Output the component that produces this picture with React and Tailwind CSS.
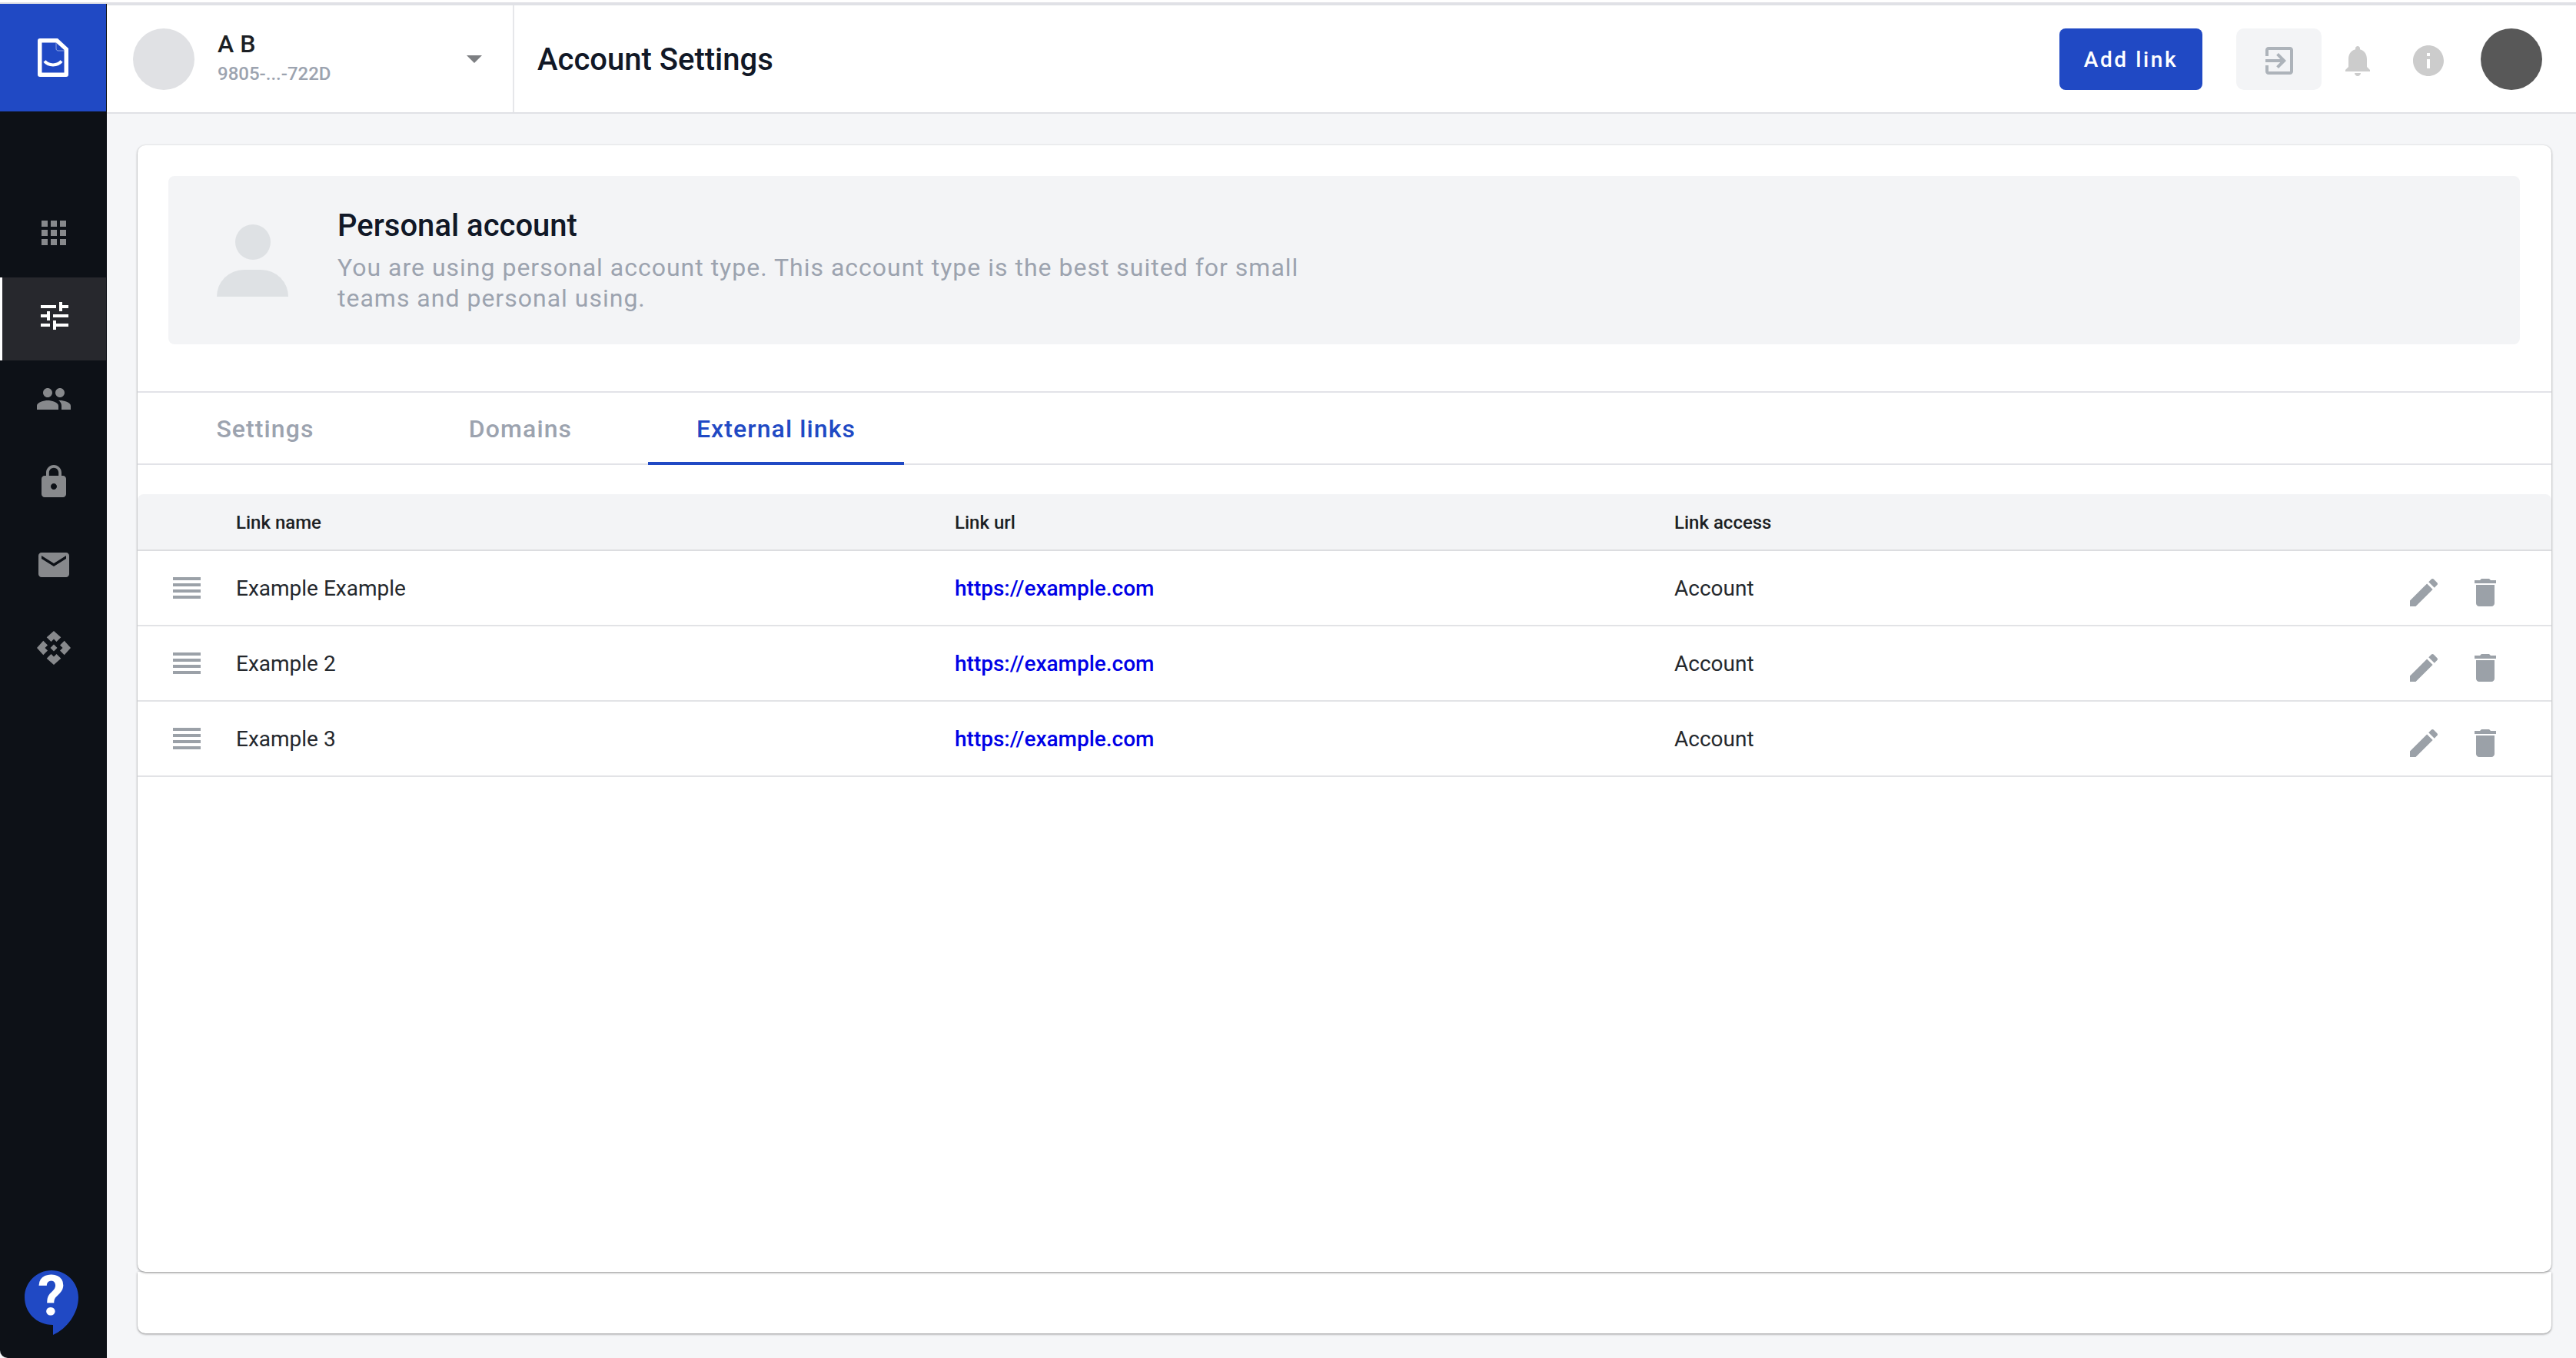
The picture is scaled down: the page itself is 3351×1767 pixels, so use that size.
const blue = 'bg-[#2049c4]'

function Icon({ d, className }) {
  return (
    <svg viewBox="0 0 24 24" className={className} fill="currentColor">
      <path d={d} />
    </svg>
  )
}

const paths = {
  apps: 'M4 8h4V4H4v4zm6 12h4v-4h-4v4zm-6 0h4v-4H4v4zm0-6h4v-4H4v4zm6 0h4v-4h-4v4zm6-10v4h4V4h-4zm-6 4h4V4h-4v4zm6 6h4v-4h-4v4zm0 6h4v-4h-4v4z',
  tune: 'M3 17v2h6v-2H3zM3 5v2h10V5H3zm10 16v-2h8v-2h-8v-2h-2v6h2zM7 9v2H3v2h4v2h2V9H7zm14 4v-2H11v2h10zm-6-4h2V7h4V5h-4V3h-2v6z',
  people: 'M16 11c1.66 0 2.99-1.34 2.99-3S17.66 5 16 5c-1.66 0-3 1.34-3 3s1.34 3 3 3zm-8 0c1.66 0 2.99-1.34 2.99-3S9.66 5 8 5C6.34 5 5 6.34 5 8s1.34 3 3 3zm0 2c-2.33 0-7 1.17-7 3.5V19h14v-2.5c0-2.33-4.67-3.5-7-3.5zm8 0c-.29 0-.62.02-.97.05 1.16.84 1.97 1.97 1.97 3.45V19h6v-2.5c0-2.33-4.67-3.5-7-3.5z',
  lock: 'M18 8h-1V6c0-2.76-2.24-5-5-5S7 3.24 7 6v2H6c-1.1 0-2 .9-2 2v10c0 1.1.9 2 2 2h12c1.1 0 2-.9 2-2V10c0-1.1-.9-2-2-2zm-6 9c-1.1 0-2-.9-2-2s.9-2 2-2 2 .9 2 2-.9 2-2 2zm3.1-9H8.9V6c0-1.71 1.39-3.1 3.1-3.1 1.71 0 3.1 1.39 3.1 3.1v2z',
  mail: 'M20 4H4c-1.1 0-1.99.9-1.99 2L2 18c0 1.1.9 2 2 2h16c1.1 0 2-.9 2-2V6c0-1.1-.9-2-2-2zm0 4l-8 5-8-5V6l8 5 8-5v2z',
  exit: 'M10.09 15.59L11.5 17l5-5-5-5-1.41 1.41L12.67 11H3v2h9.67l-2.58 2.59zM19 3H5c-1.11 0-2 .9-2 2v4h2V5h14v14H5v-4H3v4c0 1.1.89 2 2 2h14c1.1 0 2-.9 2-2V5c0-1.1-.9-2-2-2z',
  bell: 'M12 22c1.1 0 2-.9 2-2h-4c0 1.1.89 2 2 2zm6-6v-5c0-3.07-1.64-5.64-4.5-6.32V4c0-.83-.67-1.5-1.5-1.5s-1.5.67-1.5 1.5v.68C7.63 5.36 6 7.92 6 11v5l-2 2v1h16v-1l-2-2z',
  info: 'M12 2C6.48 2 2 6.48 2 12s4.48 10 10 10 10-4.48 10-10S17.52 2 12 2zm1 15h-2v-6h2v6zm0-8h-2V7h2v2z',
  edit: 'M3 17.25V21h3.75L17.81 9.94l-3.75-3.75L3 17.25zM20.71 7.04c.39-.39.39-1.02 0-1.41l-2.34-2.34c-.39-.39-1.02-.39-1.41 0l-1.83 1.83 3.75 3.75 1.83-1.83z',
  trash: 'M6 19c0 1.1.9 2 2 2h8c1.1 0 2-.9 2-2V7H6v12zM19 4h-3.5l-1-1h-5l-1 1H5v2h14V4z',
}

function Logo() {
  return (
    <svg viewBox="0 0 40 50" className="w-[40px] h-[50px]">
      <path fill="#fff" d="M3 0H26L40 13V47C40 49 39 50 37 50H3C1 50 0 49 0 47V3C0 1 1 0 3 0Z" />
      <path fill="#2049c4" d="M5.5 5.5H24L34.5 15V44.5H5.5Z" />
      <path fill="none" stroke="#fff" strokeOpacity="0.5" strokeWidth="1" d="M24 5.5V13C24 15 25 16 27 16H34.5" />
      <path fill="none" stroke="#fff" strokeWidth="4" d="M9 29.5C14 36 26 36 31 29.5" />
    </svg>
  )
}

function Diamonds() {
  const arm = 'M22 0L31.3 8.3L25.5 14L22 10.5L18.5 14L12.7 8.3Z'
  return (
    <svg viewBox="0 0 44 44" className="w-[44px] h-[44px]" fill="currentColor">
      <path d={arm} />
      <path d={arm} transform="rotate(90 22 22)" />
      <path d={arm} transform="rotate(180 22 22)" />
      <path d={arm} transform="rotate(270 22 22)" />
      <path d="M22 17.5L26.5 22L22 26.5L17.5 22Z" />
    </svg>
  )
}

function HelpBubble() {
  return (
    <div className="relative w-[70px] h-[84px]">
      <svg viewBox="0 0 70 84" className="w-[70px] h-[84px]">
        <path fill="#2049c4" d="M35 0C54.3 0 70 15.7 70 35C70 56 55 76 37 84V71C15 71 0 54.3 0 35C0 15.7 15.7 0 35 0Z" />
      </svg>
      <span className="absolute left-[17px] top-[-8px] text-[72px] leading-[84px] font-bold text-white">?</span>
    </div>
  )
}

function Sidebar() {
  return (
    <aside className="w-[139px] shrink-0 flex flex-col bg-[#0d1117] rounded-bl-[10px] text-[#87898c]">
      <div className="w-[138px] h-[140px] bg-[#2049c4] flex items-center justify-center">
        <Logo />
      </div>
      <div className="mt-[104px] h-[108px] flex items-center justify-center">
        <Icon d={paths.apps} className="w-[48px] h-[48px]" />
      </div>
      <div className="mt-[4px] w-[138px] h-[108px] pb-[8px] bg-[#27282d] border-l-[3px] border-white flex items-center justify-center text-white">
        <Icon d={paths.tune} className="w-[48px] h-[48px]" />
      </div>
      <div className="h-[100px] flex items-center justify-center">
        <Icon d={paths.people} className="w-[48px] h-[48px]" />
      </div>
      <div className="mt-[8px] h-[100px] flex items-center justify-center">
        <Icon d={paths.lock} className="w-[48px] h-[48px]" />
      </div>
      <div className="mt-[8px] h-[100px] flex items-center justify-center">
        <Icon d={paths.mail} className="w-[48px] h-[48px]" />
      </div>
      <div className="mt-[8px] h-[100px] flex items-center justify-center">
        <Diamonds />
      </div>
      <div className="mt-auto mb-[30px] pl-[32px]">
        <HelpBubble />
      </div>
    </aside>
  )
}

function Header() {
  return (
    <header className="h-[143px] shrink-0 flex items-stretch bg-white border-t-2 border-b-2 border-[#e0e1e6]">
      <div className="w-[530px] shrink-0 flex items-center pl-[34px] pr-[40px] border-r-2 border-[#e6e7ea]">
        <div className="w-[80px] h-[80px] rounded-full bg-[#e0e1e4]" />
        <div className="ml-[30px] flex-1 -mt-[4px]">
          <div className="text-[32px] leading-[34px] font-medium text-[#1c1f24]">A B</div>
          <div className="mt-[8px] text-[24px] leading-[28px] font-medium text-[#9ca3af]">9805-...-722D</div>
        </div>
        <div className="w-0 h-0 border-x-[10px] border-x-transparent border-t-[10px] border-t-[#7d7f82]" />
      </div>
      <h1 className="ml-[30px] mt-[2px] self-center text-[40px] font-medium text-[#111827]">Account Settings</h1>
      <div className="ml-auto flex items-center pr-[44px]">
        <button className={`w-[186px] h-[80px] pt-[2px] rounded-[8px] ${blue} text-white text-[28px] font-medium tracking-[2.6px]`}>Add link</button>
        <div className="ml-[44px] w-[111px] h-[80px] pt-[5px] rounded-[10px] bg-[#f3f4f6] flex items-center justify-center text-[#adb3ba]">
          <Icon d={paths.exit} className="w-[48px] h-[48px]" />
        </div>
        <Icon d={paths.bell} className="ml-[23px] mt-[5px] w-[48px] h-[48px] text-[#cccccc]" />
        <Icon d={paths.info} className="ml-[44px] mt-[5px] w-[48px] h-[48px] text-[#cccccc]" />
        <div className="ml-[44px] w-[80px] h-[80px] rounded-full bg-[#585858]" />
      </div>
    </header>
  )
}

function AccountBanner() {
  return (
    <div className="mt-[40px] ml-[40px] mr-[41px] h-[219px] rounded-[8px] bg-[#f3f4f6] flex pl-[63px]">
      <div className="w-[93px] mt-[63px] flex flex-col items-center">
        <div className="w-[46px] h-[46px] rounded-full bg-[#dee1e4]" />
        <div className="mt-[13px] w-[93px] h-[35px] rounded-t-[46px] bg-[#dee1e4]" />
      </div>
      <div className="ml-[64px] pt-[39px]">
        <h2 className="text-[40px] leading-[52px] font-medium text-[#111827]">Personal account</h2>
        <p className="mt-[8px] w-[1300px] text-[32px] leading-[40px] tracking-[1px] text-[#9ca3af]">
          You are using personal account type. This account type is the best suited for small teams and personal using.
        </p>
      </div>
    </div>
  )
}

function Tabs() {
  const tabs = ['Settings', 'Domains', 'External links']
  return (
    <div className="mt-[61px] h-[96px] flex border-y-2 border-[#e2e3e8]">
      {tabs.map((t, i) => (
        <div
          key={t}
          className={
            i === 2
              ? 'w-[333px] h-[94px] pt-[3px] flex items-center justify-center text-[32px] font-medium tracking-[1.1px] text-[#2049c4] border-b-4 border-[#2049c4]'
              : 'w-[332px] h-[92px] pt-[2px] flex items-center justify-center text-[32px] font-medium tracking-[1.1px] text-[#9ca3af]'
          }
        >
          {t}
        </div>
      ))}
    </div>
  )
}

const rows = ['Example Example', 'Example 2', 'Example 3']

function LinksTable() {
  return (
    <div className="mt-[38px]">
      <div className="h-[74px] pt-[2px] flex items-center pl-[128px] bg-[#f3f4f6] border-b-2 border-[#dcdde0] rounded-t-[8px] text-[24px] font-medium text-[#1c1f24]">
        <div className="w-[935px]">Link name</div>
        <div className="w-[936px]">Link url</div>
        <div>Link access</div>
      </div>
      {rows.map((name) => (
        <div key={name} className="h-[98px] flex items-center border-b-2 border-[#e2e3e6] text-[28px] text-[#24282d]">
          <svg viewBox="0 0 36 28" className="ml-[46px] w-[36px] h-[28px]" fill="#9ba1a8">
            <rect y="0" width="36" height="4" />
            <rect y="8" width="36" height="4" />
            <rect y="16" width="36" height="4" />
            <rect y="24" width="36" height="4" />
          </svg>
          <div className="ml-[46px] w-[935px] pt-[1px]">{name}</div>
          <a href="#" className="w-[936px] pt-[1px] font-medium text-[#0000e6]">https://example.com</a>
          <div className="pt-[1px]">Account</div>
          <div className="ml-auto mr-[62px] pt-[12px] flex gap-[32px] text-[#9ba1a8]">
            <Icon d={paths.edit} className="w-[48px] h-[48px]" />
            <Icon d={paths.trash} className="w-[48px] h-[48px]" />
          </div>
        </div>
      ))}
    </div>
  )
}

export default function App() {
  return (
    <div className="h-[1767px] pt-[3px] bg-white font-['Roboto',sans-serif]">
      <div className="h-[1764px] flex border-t-2 border-[#e0e1e6] bg-[#f5f6f8]">
        <Sidebar />
        <div className="flex-1 min-w-0 flex flex-col">
          <Header />
          <main className="flex-1 pt-[41px] pl-[40px] pr-[32px]">
            <div className="relative z-10 h-[1466px] rounded-[10px] bg-white shadow-[0_1px_3px_rgba(0,0,0,0.45)] overflow-hidden">
              <AccountBanner />
              <Tabs />
              <LinksTable />
            </div>
            <div className="h-[80px] rounded-b-[10px] bg-white shadow-[0_1px_3px_rgba(0,0,0,0.45)]" />
          </main>
        </div>
      </div>
    </div>
  )
}
